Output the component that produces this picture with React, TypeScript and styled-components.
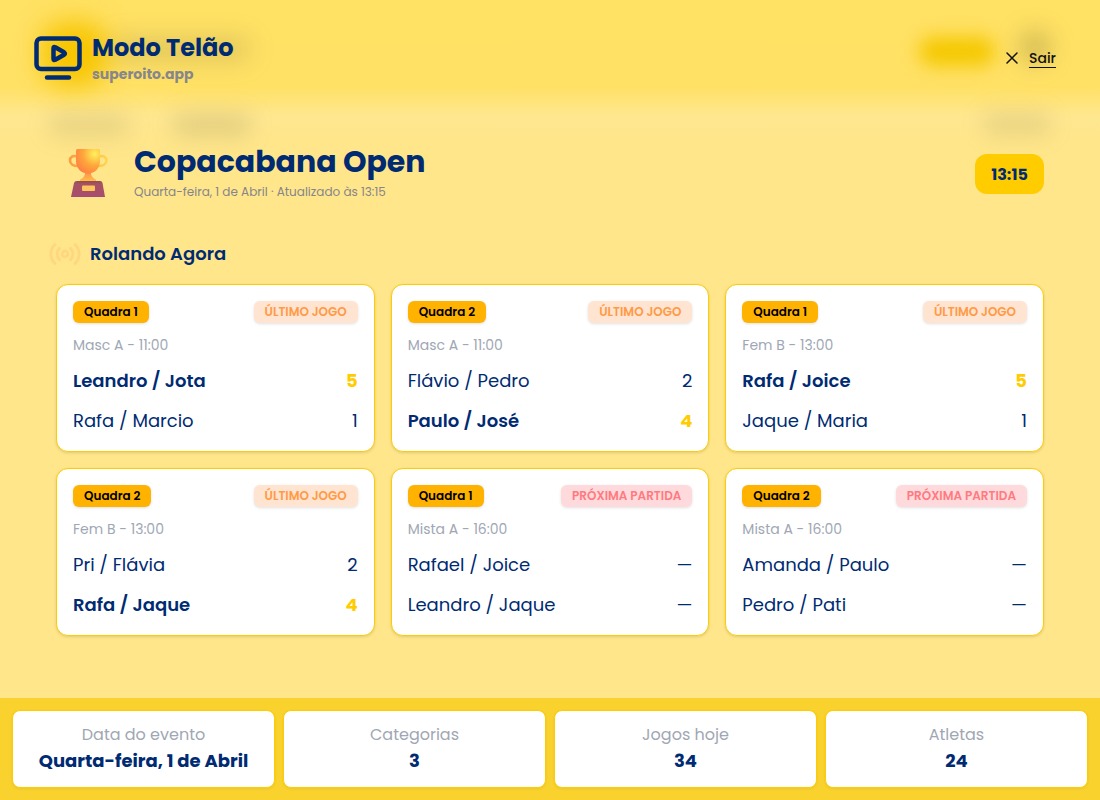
import React from "react";
import styled, { createGlobalStyle } from "styled-components";

const navy = "#002b72";
const yellow = "#ffcc00";

const GlobalStyle = createGlobalStyle`
  *, *::before, *::after { box-sizing: border-box; }
  body {
    margin: 0;
    background: #ffe68a;
    color: ${navy};
    font-family: Poppins, Inter, "Open Sans", sans-serif;
  }
  h1, h2, h3, p, dl, dt, dd { margin: 0; }
`;

const Page = styled.div`
  position: relative;
  min-height: 100vh;
  display: flex;
  flex-direction: column;
  overflow: hidden;
`;

const Backdrop = styled.div`
  position: absolute;
  inset: 0 0 auto;
  height: 148px;
  background: linear-gradient(#ffe163 0, #ffe166 88px, #ffe790 116px, #ffe68a 148px);
`;

const Glow = styled.span<{ $x: string; $y: number; $w: number; $h: number; $color: string; $blur: number }>`
  position: absolute;
  left: ${(p) => p.$x};
  top: ${(p) => p.$y}px;
  width: ${(p) => p.$w}px;
  height: ${(p) => p.$h}px;
  border-radius: 24px;
  background: ${(p) => p.$color};
  filter: blur(${(p) => p.$blur}px);
`;

const TopBar = styled.header`
  position: relative;
  display: flex;
  align-items: center;
  justify-content: space-between;
  padding: 32px 44px 32px 34px;
`;

const Brand = styled.div`
  display: flex;
  align-items: center;
  gap: 10px;
`;

const BrandName = styled.h1`
  font-size: 24px;
  line-height: 32px;
  font-weight: 700;
`;

const BrandSite = styled.p`
  font-size: 14px;
  line-height: 20px;
  font-weight: 700;
  color: #86868b;
`;

const ExitLink = styled.a`
  display: flex;
  align-items: center;
  gap: 11px;
  color: #111;
  font-size: 14px;
  line-height: 18px;
  font-weight: 500;
  text-decoration: none;
`;

const ExitText = styled.span`
  border-bottom: 1px solid #111;
`;

const Main = styled.main`
  position: relative;
  display: flex;
  flex-direction: column;
  padding: 28px 56px;
`;

const EventHeader = styled.section`
  display: flex;
  align-items: center;
  gap: 22px;
  padding: 0 0 0 8px;
`;

const EventTitle = styled.h2`
  font-size: 30px;
  line-height: 36px;
  font-weight: 700;
`;

const EventInfo = styled.div`
  flex: 1;
  display: flex;
  flex-direction: column;
  gap: 4px;
  padding-bottom: 4px;
`;

const EventMeta = styled.p`
  font-size: 12px;
  line-height: 16px;
  color: #85858a;
`;

const Clock = styled.time`
  display: grid;
  place-items: center;
  min-width: 69px;
  height: 40px;
  border-radius: 12px;
  background: ${yellow};
  font-size: 16px;
  font-weight: 700;
`;

const SectionTitle = styled.h2`
  display: flex;
  align-items: center;
  gap: 9px;
  margin: 34px 0 14px -7px;
  font-size: 18px;
  line-height: 32px;
  font-weight: 600;
`;

const Games = styled.section`
  display: grid;
  grid-template-columns: repeat(3, 1fr);
  gap: 16px;
`;

const Card = styled.article`
  padding: 16px;
  border: 1px solid ${yellow};
  border-radius: 12px;
  background: #fff;
  box-shadow: 0 1px 3px rgba(0, 0, 0, 0.12);
`;

const CardTop = styled.div`
  display: flex;
  justify-content: space-between;
`;

const Badge = styled.span<{ $kind: "court" | "last" | "next" }>`
  padding: 0 11px;
  border-radius: 6px;
  font-size: 12px;
  line-height: 22px;
  font-weight: 600;
  white-space: nowrap;
  box-shadow: 0 1px 3px rgba(0, 0, 0, 0.12);
  color: ${(p) => ({ court: "#000", last: "#ff9a45", next: "#ff7a80" })[p.$kind]};
  background: ${(p) => ({ court: "#ffb300", last: "#ffe4d2", next: "#ffdadc" })[p.$kind]};
`;

const Category = styled.p`
  margin: 12px 0;
  font-size: 14px;
  line-height: 20px;
  color: #a0a7b4;
`;

const Team = styled.div<{ $winner: boolean }>`
  display: flex;
  justify-content: space-between;
  font-size: 18px;
  line-height: 28px;
  font-weight: ${(p) => (p.$winner ? 600 : 400)};
  & + & { margin-top: 12px; }
`;

const Score = styled.span<{ $winner: boolean }>`
  color: ${(p) => (p.$winner ? yellow : navy)};
  font-weight: ${(p) => (p.$winner ? 700 : 400)};
`;

const Summary = styled.dl`
  position: relative;
  display: grid;
  grid-template-columns: repeat(4, 1fr);
  gap: 8px;
  margin-top: auto;
  padding: 12px;
  background: #f9d22e;
`;

const Stat = styled.div`
  padding: 12px;
  border: 1px solid ${yellow};
  border-radius: 8px;
  background: #fff;
  text-align: center;
  box-shadow: 0 1px 3px rgba(0, 0, 0, 0.06);
`;

const StatLabel = styled.dt`
  font-size: 16px;
  line-height: 24px;
  color: #a0a7b4;
`;

const StatValue = styled.dd`
  font-size: 18px;
  line-height: 28px;
  font-weight: 700;
`;

const ScreenIcon = () => (
  <svg width="48" height="46" viewBox="0 0 48 46" fill="none" stroke={navy} strokeWidth="4.500" strokeLinecap="round" strokeLinejoin="round" aria-hidden="true">
    <rect x="2.500" y="3.500" width="43" height="30.500" rx="4.500" />
    <path d="M19.500 13.200v10.600q0 2 1.800.9l8.700-4.900q1.800-1.300 0-2.600l-8.700-4.900q-1.800-1.100-1.800.9Z" />
    <path d="M13 42.500h22" />
  </svg>
);

const CloseIcon = () => (
  <svg width="12" height="12" viewBox="0 0 12 12" stroke="#111" strokeWidth="1.500" strokeLinecap="round" aria-hidden="true">
    <path d="M1 1l10 10M11 1L1 11" />
  </svg>
);

const TrophyIcon = () => (
  <svg width="48" height="52" viewBox="0 1 48 52" fill="none" aria-hidden="true">
    <defs>
      <radialGradient id="cup" cx="0.78" cy="0.2" r="0.9">
        <stop offset="0" stopColor="#fff25b" />
        <stop offset="0.55" stopColor="#ffa53a" />
        <stop offset="1" stopColor="#ff8142" />
      </radialGradient>
      <linearGradient id="handle" x1="0" y1="0" x2="1" y2="0">
        <stop offset="0" stopColor="#ff9c3f" />
        <stop offset="1" stopColor="#ffd44f" />
      </linearGradient>
      <linearGradient id="stem" x1="0" y1="0" x2="0" y2="1">
        <stop offset="0" stopColor="#ff8d54" />
        <stop offset="1" stopColor="#ffc43f" />
      </linearGradient>
      <linearGradient id="base" x1="0" y1="0" x2="0" y2="1">
        <stop offset="0" stopColor="#934a59" />
        <stop offset="0.200" stopColor="#a65361" />
        <stop offset="1" stopColor="#a84c70" />
      </linearGradient>
    </defs>
    <path d="M13 9.500C9 8 6 10 6 13.500S9.500 19 14 19M35 9.500c4-1.500 7.500 .5 7.500 4S39 19 34 19" stroke="url(#handle)" strokeWidth="2.600" />
    <path d="M21 25h6c0 4 1.500 6 5 7.500V35H16v-2.500c3.500-1.500 5-3.500 5-7.500Z" fill="url(#stem)" />
    <path d="M13.500 2h21q1.500 0 1.500 1.500V14c0 7-5 12.500-12 12.500S12 21 12 14V3.500Q12 2 13.500 2Z" fill="url(#cup)" />
    <path d="M13 34h23q2 0 2.500 2L41 50H7l3-14q.5-2 3-2Z" fill="url(#base)" />
    <rect x="18" y="38.500" width="13" height="5.500" rx="1" fill="#ffc45c" />
  </svg>
);

const LiveIcon = () => (
  <svg width="32" height="32" viewBox="0 0 24 24" fill="none" stroke="#ffd782" strokeWidth="2.200" strokeLinecap="round" strokeLinejoin="round" aria-hidden="true">
    <path d="M4.400 19C.4 15.100.4 8.900 4.400 5M7.800 16.200a6 6 0 0 1 0-8.400M16.200 7.800a6 6 0 0 1 0 8.400M19.600 5c4 3.900 4 10.100 0 14" />
    <circle cx="12" cy="12" r="2.200" />
  </svg>
);

type Side = { name: string; score?: number };
type Game = { court: string; status: "last" | "next"; category: string; sides: [Side, Side] };

const games: Game[] = [
  { court: "Quadra 1", status: "last", category: "Masc A - 11:00", sides: [{ name: "Leandro / Jota", score: 5 }, { name: "Rafa / Marcio", score: 1 }] },
  { court: "Quadra 2", status: "last", category: "Masc A - 11:00", sides: [{ name: "Flávio / Pedro", score: 2 }, { name: "Paulo / José", score: 4 }] },
  { court: "Quadra 1", status: "last", category: "Fem B - 13:00", sides: [{ name: "Rafa / Joice", score: 5 }, { name: "Jaque / Maria", score: 1 }] },
  { court: "Quadra 2", status: "last", category: "Fem B - 13:00", sides: [{ name: "Pri / Flávia", score: 2 }, { name: "Rafa / Jaque", score: 4 }] },
  { court: "Quadra 1", status: "next", category: "Mista A - 16:00", sides: [{ name: "Rafael / Joice" }, { name: "Leandro / Jaque" }] },
  { court: "Quadra 2", status: "next", category: "Mista A - 16:00", sides: [{ name: "Amanda / Paulo" }, { name: "Pedro / Pati" }] },
];

const stats = [
  ["Data do evento", "Quarta-feira, 1 de Abril"],
  ["Categorias", "3"],
  ["Jogos hoje", "34"],
  ["Atletas", "24"],
];

const GameCard = ({ game }: { game: Game }) => {
  const best = Math.max(...game.sides.map((s) => s.score ?? -1));
  return (
    <Card>
      <CardTop>
        <Badge $kind="court">{game.court}</Badge>
        <Badge $kind={game.status}>{game.status === "last" ? "ÚLTIMO JOGO" : "PRÓXIMA PARTIDA"}</Badge>
      </CardTop>
      <Category>{game.category}</Category>
      {game.sides.map((side) => {
        const winner = side.score !== undefined && side.score === best;
        return (
          <Team key={side.name} $winner={winner}>
            <span>{side.name}</span>
            <Score $winner={winner}>{side.score ?? "—"}</Score>
          </Team>
        );
      })}
    </Card>
  );
};

export default function App() {
  return (
    <>
      <GlobalStyle />
      <Page>
        <Backdrop aria-hidden="true">
          <Glow $x="41px" $y={22} $w={66} $h={64} $color="#f7c500" $blur={13} />
          <Glow $x="110px" $y={38} $w={140} $h={22} $color="rgba(130,120,60,.26)" $blur={12} />
          <Glow $x="48px" $y={114} $w={82} $h={22} $color="rgba(120,115,70,.17)" $blur={11} />
          <Glow $x="172px" $y={114} $w={80} $h={22} $color="rgba(120,115,70,.21)" $blur={11} />
          <Glow $x="calc(100% - 181px)" $y={37} $w={76} $h={29} $color="#f5c800" $blur={9} />
          <Glow $x="calc(100% - 82px)" $y={30} $w={34} $h={34} $color="rgba(130,120,60,.32)" $blur={11} />
          <Glow $x="calc(100% - 118px)" $y={113} $w={70} $h={22} $color="rgba(120,115,70,.17)" $blur={11} />
        </Backdrop>
        <TopBar>
          <Brand>
            <ScreenIcon />
            <div>
              <BrandName>Modo Telão</BrandName>
              <BrandSite>superoito.app</BrandSite>
            </div>
          </Brand>
          <ExitLink href="#">
            <CloseIcon />
            <ExitText>Sair</ExitText>
          </ExitLink>
        </TopBar>
        <Main>
          <EventHeader>
            <TrophyIcon />
            <EventInfo>
              <EventTitle>Copacabana Open</EventTitle>
              <EventMeta>Quarta-feira, 1 de Abril · Atualizado às 13:15</EventMeta>
            </EventInfo>
            <Clock>13:15</Clock>
          </EventHeader>
          <SectionTitle>
            <LiveIcon />
            Rolando Agora
          </SectionTitle>
          <Games>
            {games.map((game, i) => (
              <GameCard key={i} game={game} />
            ))}
          </Games>
        </Main>
        <Summary>
          {stats.map(([label, value]) => (
            <Stat key={label}>
              <StatLabel>{label}</StatLabel>
              <StatValue>{value}</StatValue>
            </Stat>
          ))}
        </Summary>
      </Page>
    </>
  );
}
